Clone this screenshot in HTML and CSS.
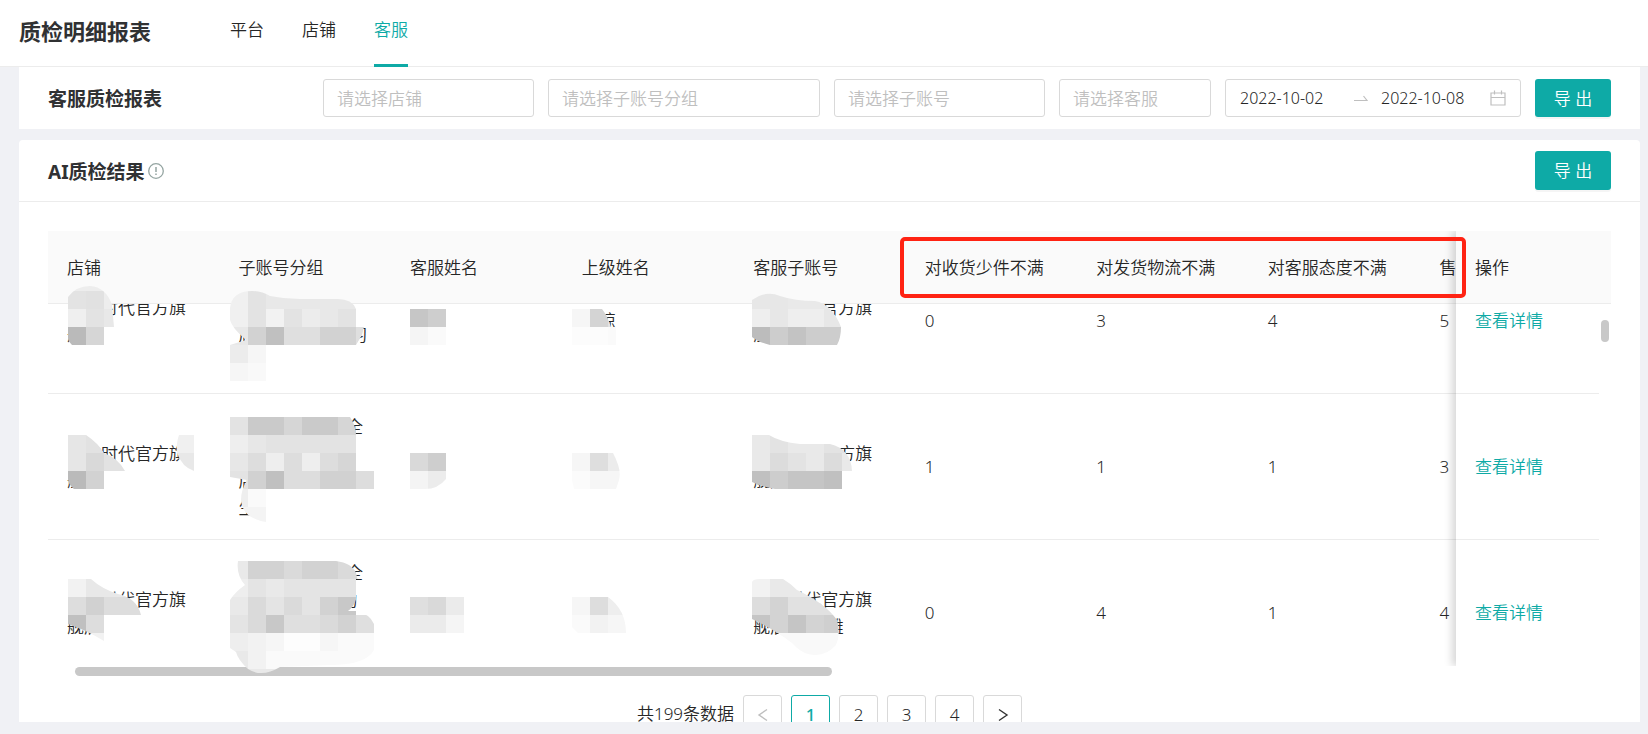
FILE: index.html
```html
<!DOCTYPE html>
<html lang="zh-CN">
<head>
<meta charset="utf-8">
<meta name="viewport" content="width=device-width, initial-scale=1">
<title>质检明细报表</title>
<link rel="stylesheet" href="styles.css">
</head>
<body>
<header class="topbar">
  <h1 class="topbar-title">质检明细报表</h1>
  <nav class="tabs">
    <a class="tab" href="#platform">平台</a>
    <a class="tab" href="#shop">店铺</a>
    <a class="tab tab-active" href="#service" aria-current="page">客服</a>
  </nav>
</header>
<main class="content">
  <section class="filter-card">
    <h2 class="card-title">客服质检报表</h2>
    <form class="filters">
      <select class="field field-md" aria-label="店铺"><option>请选择店铺</option></select>
      <select class="field field-lg" aria-label="子账号分组"><option>请选择子账号分组</option></select>
      <select class="field field-md" aria-label="子账号"><option>请选择子账号</option></select>
      <select class="field field-sm" aria-label="客服"><option>请选择客服</option></select>
      <div class="range">
        <input class="range-input" type="text" value="2022-10-02" aria-label="开始日期">
        <svg class="range-arrow" width="14" height="8" viewBox="0 0 14 8"><path d="M0 6.500h13L9.500 2" fill="none" stroke="#bfbfbf" stroke-width="1.200"/></svg>
        <input class="range-input" type="text" value="2022-10-08" aria-label="结束日期">
        <svg class="range-icon" width="16" height="16" viewBox="0 0 16 16"><path d="M1 3h14v12H1zM1 7.500h14M4.500 .5v4M11.500 .5v4" fill="none" stroke="#bfbfbf" stroke-width="1.200"/></svg>
      </div>
      <button class="primary" type="button">导 出</button>
    </form>
  </section>

  <section class="result-card">
    <div class="result-head">
      <h2 class="card-title">AI质检结果</h2>
      <svg class="info" width="16" height="16" viewBox="0 0 16 16"><circle cx="8" cy="8" r="7.300" fill="none" stroke="#95a5a2" stroke-width="1.300"/><path d="M8 4v5M8 10.500v1.500" stroke="#95a5a2" stroke-width="1.500"/></svg>
      <button class="primary" type="button">导 出</button>
    </div>
    <div class="result-body">
      <div class="grid">
        <div class="grid-main">
          <table class="table table-wide">
            <thead>
              <tr><th>店铺</th><th>子账号分组</th><th>客服姓名</th><th>上级姓名</th><th>客服子账号</th><th>对收货少件不满</th><th>对发货物流不满</th><th>对客服态度不满</th><th>售后不满</th></tr>
            </thead>
          </table>
          <div class="viewport">
            <table class="table table-wide scrolled">
              <tbody>
                <tr><td>　　时代官方旗<br>舰店</td><td>&nbsp;<br>&nbsp;<br>店　　　　　- 习<br>&nbsp;</td><td></td><td>　琼</td><td>　　　　官方旗<br>舰店</td><td>0</td><td>3</td><td>4</td><td>5</td></tr>
                <tr><td>　　时代官方旗<br>舰店</td><td>　　　　　　-全<br>&nbsp;<br>店<br>生</td><td></td><td></td><td>　　　　　方旗<br>舰店</td><td>1</td><td>1</td><td>1</td><td>3</td></tr>
                <tr><td>　　时代官方旗<br>舰店</td><td>　　　　　　-全<br>　　　　　　约<br>&nbsp;<br>&nbsp;</td><td></td><td></td><td>　　时代官方旗<br>舰店　　-雅</td><td>0</td><td>4</td><td>1</td><td>4</td></tr>
              </tbody>
            </table>
          </div>
        </div>
        <div class="grid-fixed">
          <table class="table">
            <thead><tr><th>操作</th></tr></thead>
          </table>
          <div class="viewport viewport-fixed">
            <table class="table scrolled">
              <tbody>
                <tr><td><a class="link" href="#d1">查看详情</a></td></tr>
                <tr><td><a class="link" href="#d2">查看详情</a></td></tr>
                <tr><td><a class="link" href="#d3">查看详情</a></td></tr>
              </tbody>
            </table>
          </div>
        </div>
        <div class="thumb-y"></div>
        <div class="track-x"><div class="thumb-x"></div></div>
        <svg class="mask" width="840" height="450" viewBox="20 231 840 450" fill="none" stroke-width="18" aria-hidden="true">
          <defs>
            <clipPath id="a1"><path d="M68 297Q76 286 90 286Q106 287 112 305L114 327H104V345H72Q68 341 68 338Z"/></clipPath>
            <clipPath id="b1"><path d="M230 308Q232 291 252 291Q262 291 270 296Q285 299 300 299H338Q352 299 356 309V327H364L362 335L356 345H266V381H230V345L246 340Q232 328 230 320Z"/></clipPath>
            <clipPath id="d1c"><path d="M572 309H602Q607 315 611 327H616V345H572Z"/></clipPath>
            <clipPath id="e1"><path d="M752 300Q766 290 780 296Q795 301 815 301Q832 304 841 327Q841 338 837 345H770Q758 342 752 337Z"/></clipPath>
            <clipPath id="a2"><path d="M68 435H86Q98 443 104 453Q118 458 125 471H104V489H74Q68 484 68 479Z"/></clipPath>
            <clipPath id="s2"><path d="M179 435H194V471Q182 467 177 453Q176 443 179 435Z"/></clipPath>
            <clipPath id="b2"><path d="M230 417H350Q356 426 356 435V471H374V489H266V522Q242 518 241 500Q241 490 247 480L230 477Z"/></clipPath>
            <clipPath id="c2"><path d="M410 453H446V479Q438 489 425 489H410Z"/></clipPath>
            <clipPath id="d2c"><path d="M572 453H613Q622 470 619 480L616 489H574L572 480Z"/></clipPath>
            <clipPath id="e2"><path d="M752 435H769Q780 442 800 444H830Q851 449 852 471H842V489H775Q760 486 752 482Z"/></clipPath>
            <clipPath id="a3"><path d="M68 579H91Q102 589 118 594Q137 598 141 615H104V641Q86 630 68 624Z"/></clipPath>
            <clipPath id="b3"><path d="M238 561H336Q352 563 356 573L359 585Q357 605 348 611H356Q370 614 374 624V650Q366 665 330 665L280 667Q262 678 248 669Q238 660 236 652L230 648V600Q235 592 245 585Q236 575 238 561Z"/></clipPath>
            <clipPath id="d3c"><path d="M572 597H608Q626 610 626 633H578L572 627Z"/></clipPath>
            <clipPath id="e3"><path d="M752 582Q753 579 760 579H783Q790 583 797 590Q825 603 837 620Q841 635 836 645Q825 658 808 654Q800 652 792 643Q775 630 752 619Z"/></clipPath>
          </defs>
          <g clip-path="url(#a1)">
            <path stroke="#ededed" d="M60 282h60M104 300h18"/><path stroke="#e3e3e3" d="M60 300h26M86 318h18"/><path stroke="#e1e1e1" d="M86 300h18"/><path stroke="#efefef" d="M60 318h26"/><path stroke="#e8e8e8" d="M104 318h18"/><path stroke="#bababa" d="M68 336h18"/><path stroke="#d6d6d6" d="M86 336h18"/>
          </g>
          <g clip-path="url(#b1)">
            <path stroke="#f0f0f0" d="M230 300h18M230 318h18"/><path stroke="#e3e3e3" d="M248 300h18M248 318h18M284 318h18M338 318h18"/><path stroke="#e8e8e8" d="M266 300h90M320 318h18M230 336h18"/><path stroke="#f2f2f2" d="M266 318h18"/><path stroke="#ececec" d="M302 318h18M230 354h18"/><path stroke="#d2d2d2" d="M248 336h18M320 336h36"/><path stroke="#c0c0c0" d="M266 336h18"/><path stroke="#dfdfdf" d="M284 336h36M356 336h18"/><path stroke="#f6f6f6" d="M248 354h18M230 372h18"/><path stroke="#f9f9f9" d="M248 372h18"/>
          </g>
          <g><path stroke="#c6c6c6" d="M410 318h18"/><path stroke="#cecece" d="M428 318h18"/><path stroke="#f5f5f5" d="M410 336h18"/><path stroke="#fafafa" d="M428 336h18"/></g>
          <g clip-path="url(#d1c)"><path stroke="#f6f6f6" d="M572 318h18"/><path stroke="#d4d4d4" d="M590 318h18"/><path stroke="#e3e3e3" d="M608 318h8"/><path stroke="#fcfcfc" d="M572 336h36"/><path stroke="#fafafa" d="M608 336h8"/></g>
          <g clip-path="url(#e1)">
            <path stroke="#e7e7e7" d="M752 300h36M770 318h18M824 318h18M752 282h36"/><path stroke="#e9e9e9" d="M788 300h54"/><path stroke="#eeeeee" d="M752 318h18M788 318h36"/><path stroke="#bcbcbc" d="M752 336h18"/><path stroke="#cdcdcd" d="M770 336h18M806 336h36"/><path stroke="#c3c3c3" d="M788 336h18"/>
          </g>
          <g clip-path="url(#a2)"><path stroke="#e6e6e6" d="M68 444h18M68 462h18"/><path stroke="#e2e2e2" d="M86 444h18M104 462h22"/><path stroke="#d9d9d9" d="M86 462h18"/><path stroke="#bababa" d="M68 480h18"/><path stroke="#d2d2d2" d="M86 480h18"/></g>
          <g clip-path="url(#s2)"><path stroke="#f0f0f0" d="M176 444h18"/><path stroke="#e8e8e8" d="M176 462h18"/></g>
          <g clip-path="url(#b2)">
            <path stroke="#e3e3e3" d="M230 426h18M230 480h18M266 444h90"/><path stroke="#cacaca" d="M248 426h36M302 426h36"/><path stroke="#d6d6d6" d="M284 426h18M338 426h18M338 462h18"/><path stroke="#eeeeee" d="M230 444h18M266 462h18M302 462h18M230 498h18"/><path stroke="#e7e7e7" d="M248 444h18M230 462h18"/><path stroke="#dddddd" d="M248 462h18M284 462h18M320 462h18M284 480h36M356 480h18"/><path stroke="#d1d1d1" d="M248 480h18M320 480h36"/><path stroke="#c0c0c0" d="M266 480h18"/><path stroke="#fafafa" d="M248 498h18"/><path stroke="#f4f4f4" d="M230 516h36"/>
          </g>
          <g clip-path="url(#c2)"><path stroke="#d9d9d9" d="M410 462h18"/><path stroke="#cecece" d="M428 462h18"/><path stroke="#f4f4f4" d="M410 480h18"/><path stroke="#ececec" d="M428 480h18"/></g>
          <g clip-path="url(#d2c)"><path stroke="#f6f6f6" d="M572 462h18M590 480h30"/><path stroke="#dedede" d="M590 462h18"/><path stroke="#ececec" d="M608 462h14"/><path stroke="#fbfbfb" d="M572 480h18"/></g>
          <g clip-path="url(#e2)"><path stroke="#e9e9e9" d="M752 444h18M788 444h36M752 462h18M806 462h18M842 462h10"/><path stroke="#e3e3e3" d="M770 444h18M824 444h28M788 462h18"/><path stroke="#dcdcdc" d="M770 462h18M824 462h18"/><path stroke="#c0c0c0" d="M752 480h18M824 480h18"/><path stroke="#cdcdcd" d="M770 480h18"/><path stroke="#c5c5c5" d="M788 480h36"/></g>
          <g clip-path="url(#a3)"><path stroke="#f2f2f2" d="M68 588h18M68 642h36"/><path stroke="#e8e8e8" d="M86 588h40"/><path stroke="#dddddd" d="M68 606h18M104 606h38M86 624h18"/><path stroke="#d1d1d1" d="M86 606h18"/><path stroke="#c0c0c0" d="M68 624h18"/></g>
          <g clip-path="url(#b3)">
            <path stroke="#e9e9e9" d="M230 570h18M266 588h18M230 606h18M230 660h18M230 678h60"/><path stroke="#d2d2d2" d="M248 570h36M302 570h36M320 606h18M338 624h18"/><path stroke="#dadada" d="M284 570h18M338 570h22M248 606h18M284 606h18M248 624h18M320 624h18"/><path stroke="#eeeeee" d="M230 588h18M230 642h18"/><path stroke="#e4e4e4" d="M248 588h18M284 588h72M266 606h18M302 606h18M230 624h18"/><path stroke="#c8c8c8" d="M338 606h18M266 624h18"/><path stroke="#dfdfdf" d="M284 624h36M356 624h18"/><path stroke="#f2f2f2" d="M248 642h18M248 660h18"/><path stroke="#f6f6f6" d="M266 642h18M320 642h18"/><path stroke="#fdfdfd" d="M284 642h36"/><path stroke="#fafafa" d="M338 642h36M266 660h108"/>
          </g>
          <g><path stroke="#dfdfdf" d="M410 606h18"/><path stroke="#d9d9d9" d="M428 606h18"/><path stroke="#ebebeb" d="M446 606h18M410 624h36"/><path stroke="#f5f5f5" d="M446 624h18"/></g>
          <g clip-path="url(#d3c)"><path stroke="#f6f6f6" d="M572 606h18M608 624h18"/><path stroke="#dddddd" d="M590 606h18"/><path stroke="#eeeeee" d="M608 606h18"/><path stroke="#fafafa" d="M572 624h18"/><path stroke="#f2f2f2" d="M590 624h18"/></g>
          <g clip-path="url(#e3)"><path stroke="#f2f2f2" d="M752 588h18"/><path stroke="#e9e9e9" d="M770 588h54"/><path stroke="#dddddd" d="M752 606h18"/><path stroke="#d3d3d3" d="M770 606h18M770 624h18M806 624h18"/><path stroke="#e1e1e1" d="M788 606h54"/><path stroke="#c5c5c5" d="M752 624h18M788 624h18"/><path stroke="#cfcfcf" d="M824 624h18"/><path stroke="#f9f9f9" d="M770 642h72M770 660h72"/></g>
        </svg>
        <div class="highlight"></div>
      </div>
      <nav class="pager" aria-label="分页">
        <span class="pager-total">共199条数据</span>
        <button class="page" type="button" disabled aria-label="上一页"><svg width="12" height="14" viewBox="0 0 12 14"><path d="M10 1.500L2 7l8 5.500" fill="none" stroke="#bfbfbf" stroke-width="1.400"/></svg></button>
        <button class="page page-active" type="button">1</button>
        <button class="page" type="button">2</button>
        <button class="page" type="button">3</button>
        <button class="page" type="button">4</button>
        <button class="page" type="button" aria-label="下一页"><svg width="12" height="14" viewBox="0 0 12 14"><path d="M2 1.500L10 7l-8 5.500" fill="none" stroke="#333" stroke-width="1.400"/></svg></button>
      </nav>
    </div>
  </section>
</main>
</body>
</html>
```
FILE: styles.css
```css
:root {
  --teal: #0eaaa6;
  --line: #ececec;
  --text: #262626;
  --page: #f0f1f5;
}

* { box-sizing: border-box; }

body {
  margin: 0;
  height: 100vh;
  display: flex;
  flex-direction: column;
  overflow: hidden;
  background: var(--page);
  color: var(--text);
  font: 350 17px/27px "Noto Sans", "Noto Sans CJK SC", sans-serif;
}

button, input, select { font: inherit; color: inherit; }
h1, h2 { margin: 0; color: #303133; }
a { text-decoration: none; color: inherit; }

.topbar {
  display: flex;
  height: 67px;
  flex: none;
  padding-left: 19px;
  gap: 79px;
  background: #fff;
  border-bottom: 1px solid var(--line);
}
.topbar-title { font-size: 22px; line-height: 62px; font-weight: 700; }
.tabs { display: flex; gap: 38px; }
.tab { height: 67px; line-height: 60px; }
.tab-active { color: var(--teal); border-bottom: 3px solid var(--teal); }

.content {
  flex: 1;
  min-height: 0;
  display: flex;
  flex-direction: column;
  gap: 11px;
  padding: 0 8px 12px 19px;
}

.filter-card {
  display: flex;
  align-items: center;
  justify-content: space-between;
  padding: 12px 29px;
  background: #fff;
}
.card-title { padding-top: 2px; font-size: 19px; line-height: 28px; font-weight: 700; white-space: nowrap; }
.filters { display: flex; gap: 14px; }
.field {
  appearance: none;
  height: 38px;
  padding: 0 13px;
  border: 1px solid #d9d9d9;
  border-radius: 3px;
  background: #fff;
  color: #bfbfbf;
}
.field-sm { width: 152px; }
.field-md { width: 211px; }
.field-lg { width: 272px; }
.range {
  display: flex;
  align-items: center;
  width: 296px;
  height: 38px;
  padding: 0 14px;
  border: 1px solid #d9d9d9;
  border-radius: 3px;
}
.range-input { width: 100px; min-width: 0; padding: 0; border: 0; outline: 0; background: none; font-size: 16px; }
.range-arrow { flex: none; margin: 0 13px 0 14px; }
.range-icon { flex: none; margin-left: auto; }
.primary {
  width: 76px;
  height: 38px;
  padding: 0;
  border: 0;
  border-radius: 3px;
  background: var(--teal);
  color: #fff;
  box-shadow: 0 2px 0 rgba(0, 0, 0, .04);
}

.result-card {
  flex: 1;
  min-height: 0;
  overflow: hidden;
  background: #fff;
  border-radius: 4px 4px 0 0;
}
.result-head {
  display: flex;
  align-items: center;
  height: 62px;
  padding: 0 29px;
  border-bottom: 1px solid var(--line);
}
.result-head .primary { height: 39px; margin-left: auto; }
.info { margin-left: 3px; }
.result-body { padding: 29px 29px 0; }

.grid { position: relative; display: flex; padding-bottom: 10px; }
.grid-main { flex: 1; min-width: 0; overflow: hidden; }
.grid-fixed { width: 155px; flex: none; background: #fff; box-shadow: -4px 0 8px rgba(0, 0, 0, .16); clip-path: inset(0 0 0 -14px); }
.table { width: 100%; table-layout: fixed; border-collapse: separate; border-spacing: 0; }
.table-wide { width: 1544px; }
.table th {
  height: 73px;
  padding: 0 19px;
  text-align: left;
  font-weight: 350;
  white-space: nowrap;
  background: #fafafa;
  border-bottom: 1px solid var(--line);
}
.table td {
  height: 146px;
  padding: 0 19px;
  white-space: pre;
  border-bottom: 1px solid var(--line);
}
.viewport { height: 362px; overflow: hidden; }
.viewport-fixed { padding-right: 12px; }
.scrolled { margin-top: -56px; }
.link { color: var(--teal); }
.thumb-y { position: absolute; top: 89px; right: 2px; width: 8px; height: 22px; border-radius: 4px; background: #c8c8c8; }
.track-x { position: absolute; left: 27px; right: 23px; bottom: 0; height: 9px; }
.thumb-x { width: 50%; height: 9px; border-radius: 5px; background: #c8c8c8; }
.mask { position: absolute; left: -28px; top: 0; }
.highlight { position: absolute; left: 852px; right: 145px; top: 6px; height: 61px; border: 4px solid #ff2313; border-radius: 5px; }

.pager { display: flex; justify-content: center; gap: 9px; margin-top: 19px; }
.pager-total { line-height: 37px; }
.page {
  display: flex;
  align-items: center;
  justify-content: center;
  width: 39px;
  height: 39px;
  padding: 0;
  border: 1px solid #d9d9d9;
  border-radius: 3px;
  background: #fff;
}
.page-active { border-color: var(--teal); color: var(--teal); font-weight: 500; }
```
